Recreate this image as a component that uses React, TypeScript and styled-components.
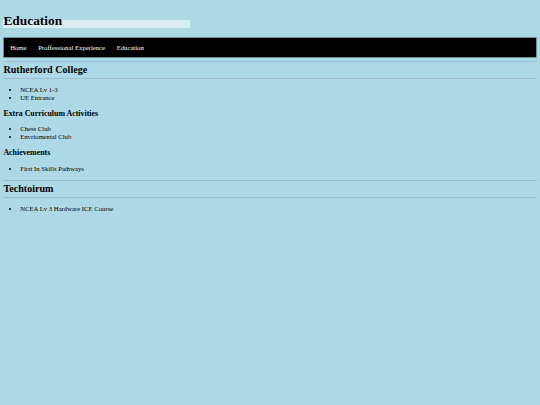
import styled, { createGlobalStyle } from 'styled-components';

const GlobalStyle = createGlobalStyle`
  html, body {
    background: #add8e6;
  }
  body {
    margin: 3.4px;
    font-family: "Liberation Serif", "Times New Roman", serif;
    color: #000;
  }
`;

const Title = styled.h1`
  font-size: 13.4px;
  line-height: 16.5px;
  font-weight: bold;
  margin: 10px 0 7.2px;
  width: 187px;
  background: linear-gradient(
    to bottom,
    transparent 7.5px,
    #dcedf4 7.5px,
    #dcedf4 15.5px,
    transparent 15.5px
  );
`;

const NavBar = styled.nav`
  display: flex;
  align-items: center;
  height: 19px;
  background: #000;
  border: 1px solid #6f8e99;
  margin-bottom: 2.6px;
`;

const NavLink = styled.a`
  color: #fff;
  font-size: 6.7px;
  padding: 0 5.8px;
  text-decoration: none;
`;

const Section = styled.section`
  margin: 0;
`;

const SchoolTitle = styled.h2`
  font-size: 10.1px;
  line-height: 12px;
  font-weight: bold;
  margin: 0 0 0 -3.4px;
  padding: 2.6px 0 1.8px 3.4px;
  border-top: 1px solid #9ebfcb;
  border-bottom: 1px solid #9ebfcb;
`;

const SubTitle = styled.h3`
  font-size: 7.9px;
  line-height: 9.5px;
  font-weight: bold;
  margin: 7px 0;
`;

const List = styled.ul`
  font-size: 6.7px;
  line-height: 8px;
  margin: 6.8px 0;
  padding-left: 16.8px;
`;

const schools = [
  {
    name: 'Rutherford College',
    groups: [
      { title: '', items: ['NCEA Lv 1-3', 'UE Entrance'] },
      { title: 'Extra Curriculum Activities', items: ['Chess Club', 'Envriomental Club'] },
      { title: 'Achievements', items: ['First In Skills Pathways'] },
    ],
  },
  {
    name: 'Techtoirum',
    groups: [{ title: '', items: ['NCEA Lv 3 Hardware ICE Course'] }],
  },
];

export default function App() {
  return (
    <>
      <GlobalStyle />
      <Title>Education</Title>
      <NavBar>
        <NavLink href="#">Home</NavLink>
        <NavLink href="#">Proffessional Experience</NavLink>
        <NavLink href="#">Education</NavLink>
      </NavBar>
      {schools.map((school) => (
        <Section key={school.name}>
          <SchoolTitle>{school.name}</SchoolTitle>
          {school.groups.map((group, i) => (
            <div key={i}>
              {group.title && <SubTitle>{group.title}</SubTitle>}
              <List>
                {group.items.map((item) => (
                  <li key={item}>{item}</li>
                ))}
              </List>
            </div>
          ))}
        </Section>
      ))}
    </>
  );
}
